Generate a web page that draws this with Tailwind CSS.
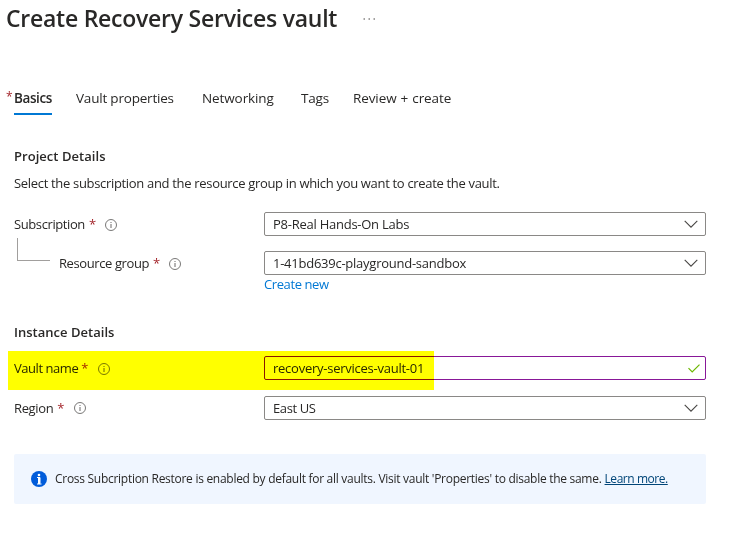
<!DOCTYPE html>
<html lang="en">
<head>
<meta charset="utf-8">
<title>Create Recovery Services vault</title>
<script src="https://cdn.jsdelivr.net/npm/@tailwindcss/browser@4"></script>
</head>
<body class="relative h-[537px] w-[745px] overflow-hidden bg-white font-['Open_Sans','Noto_Sans',sans-serif] text-[13px] leading-5 text-[#292827] whitespace-nowrap">
<svg class="hidden">
  <symbol id="info" viewBox="0 0 12 12"><circle cx="6" cy="6" r="5.5" fill="none" stroke="#6a6968" stroke-width=".9"/><path d="M6 5v4M6 3v1" stroke="#6a6968" stroke-width="1"/></symbol>
  <symbol id="chevron" viewBox="0 0 14 8"><path d="M.7.8 7 7.1 13.3.8" fill="none" stroke="#484644" stroke-width="1.1"/></symbol>
</svg>
<header class="flex h-[36px] items-center pl-[6px]">
  <h1 class="w-[357px] text-[23px] font-semibold leading-8 tracking-[-0.25px]">Create Recovery Services vault</h1>
  <svg class="mt-[2px] h-[2px] w-[13px]" viewBox="0 0 13 2"><path d="M.5 1H2M5.5 1H7M10.500 1H12" stroke="#484644" stroke-width="1.2"/></svg>
</header>
<nav class="mt-[52px] flex h-[27px] pl-[6px] text-[13.5px] tracking-[-0.2px]">
  <span class="w-2 text-[12px] leading-[18px] text-[#a4262c]">*</span>
  <span class="w-[38px] border-b-2 border-[#0078d4] font-semibold tracking-[-0.4px]">Basics</span>
  <span class="ml-6 w-[126px]">Vault properties</span>
  <span class="w-[99px] tracking-[-0.1px]">Networking</span>
  <span class="w-[52px]">Tags</span>
  <span class="tracking-[-0.1px] [word-spacing:0.7px]">Review + create</span>
</nav>
<main class="w-[706px] pl-[14px] tracking-[-0.25px]">
  <h2 class="mt-[31px] font-semibold tracking-[0.04px]">Project Details</h2>
  <p class="mt-[7px] tracking-[-0.32px]">Select the subscription and the resource group in which you want to create the vault.</p>
  <div class="mt-[19px] flex h-6 items-center">
    <div class="flex w-[250px] items-center"><span class="tracking-[-0.4px]">Subscription</span><span class="ml-1 text-[#a4262c]">*</span><svg class="ml-[9px] mt-[2px] size-3"><use href="#info"/></svg></div>
    <div class="flex h-6 flex-1 items-center justify-between rounded-[2px] border border-[#8a8886] px-2"><span>P8-Real Hands-On Labs</span><svg class="mr-[-1px] h-2 w-[14px]"><use href="#chevron"/></svg></div>
  </div>
  <div class="flex pt-[15px]">
    <div class="-mt-[13px] ml-[3px] h-[23px] w-[33px] border-b border-l border-[#a19f9d]"></div>
    <div class="ml-[9px] flex h-6 w-[205px] items-center"><span class="tracking-[-0.4px]">Resource group</span><span class="ml-1 text-[#a4262c]">*</span><svg class="ml-[9px] mt-[2px] size-3"><use href="#info"/></svg></div>
    <div class="flex h-6 flex-1 items-center justify-between rounded-[2px] border border-[#8a8886] px-2"><span>1-41bd639c-playground-sandbox</span><svg class="mr-[-1px] h-2 w-[14px]"><use href="#chevron"/></svg></div>
  </div>
  <div class="-mt-px pl-[250px]"><a class="block tracking-[-0.4px] text-[#0078d4]">Create new</a></div>
  <h2 class="mt-[28px] font-semibold tracking-[0.02px]">Instance Details</h2>
  <div class="mt-[14px] flex h-6 items-center">
    <div class="flex w-[250px] items-center"><span class="tracking-[-0.45px]">Vault name</span><span class="ml-[3px] text-[#a4262c]">*</span><svg class="ml-[10px] mt-[2px] size-3"><use href="#info"/></svg></div>
    <div class="flex h-6 flex-1 items-center justify-between rounded-[2px] border border-[#881798] px-2"><span>recovery-services-vault-01</span><svg class="mr-[-3px] h-[9px] w-3" viewBox="0 0 12 9"><path d="M.5 4.2 4.2 7.9 11.5.6" fill="none" stroke="#6bb700" stroke-width="1.2"/></svg></div>
  </div>
  <div class="mt-4 flex h-6 items-center">
    <div class="flex w-[250px] items-center"><span class="tracking-[-0.35px]">Region</span><span class="ml-1 text-[#a4262c]">*</span><svg class="ml-[10px] size-3"><use href="#info"/></svg></div>
    <div class="flex h-6 flex-1 items-center justify-between rounded-[2px] border border-[#8a8886] px-2"><span class="tracking-[-0.4px]">East US</span><svg class="mr-[-1px] h-2 w-[14px]"><use href="#chevron"/></svg></div>
  </div>
  <div class="mt-[34px] flex h-[50px] items-center rounded-[2px] bg-[#f0f6ff] pl-[17px] text-[12px]">
    <svg class="mr-2 size-4" viewBox="0 0 16 16"><circle cx="8" cy="8" r="8" fill="#015cda"/><circle cx="8" cy="4" r="1.3" fill="#fff"/><path d="M6 6.500h3v6M6 13h4.500" fill="none" stroke="#fff" stroke-width="1"/><path d="M8 6.500v6.500" stroke="#fff" stroke-width="2"/></svg>
    <span class="tracking-[-0.28px]">Cross Subcription Restore is enabled by default for all vaults. Visit vault 'Properties' to disable the same.</span>
    <a class="ml-[3px] tracking-[-0.45px] text-[#004578] underline">Learn more.</a>
  </div>
</main>
<div class="pointer-events-none absolute left-[8px] top-[351px] h-[39px] w-[426px] bg-[#ffff00] mix-blend-multiply"></div>
</body>
</html>
